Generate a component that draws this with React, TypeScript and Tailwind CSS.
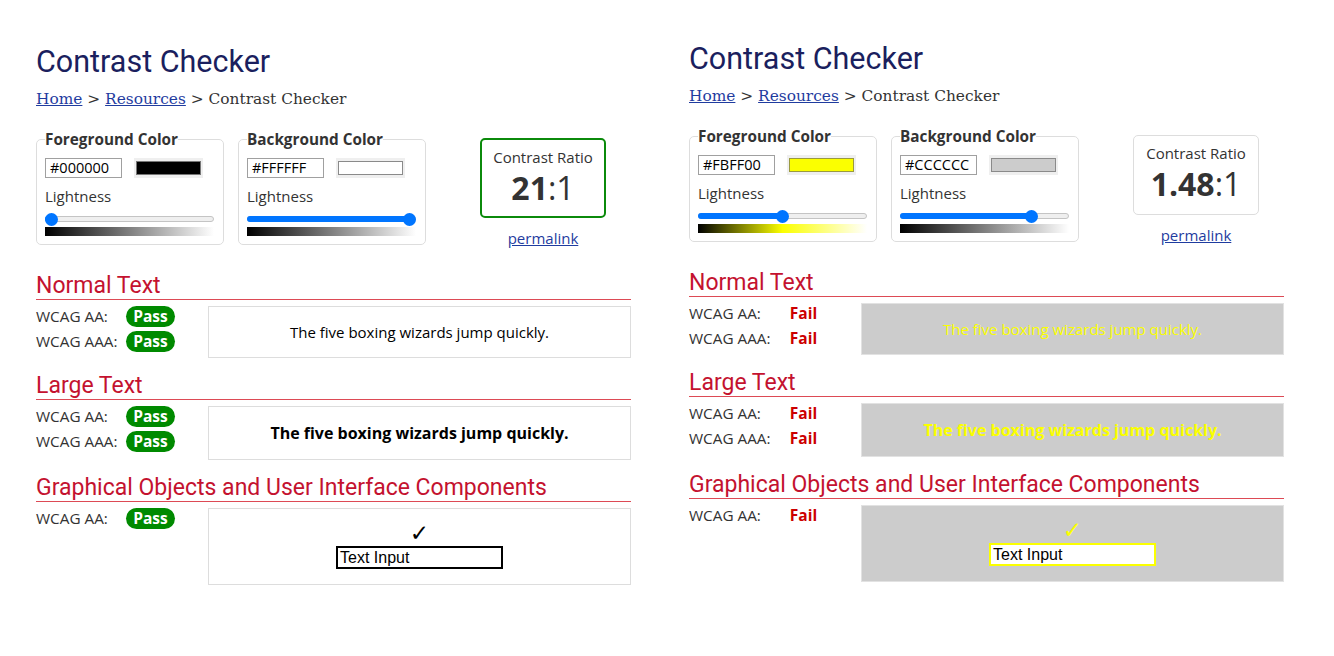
const panels = [
  {
    fg: "#000000",
    bg: "#FFFFFF",
    fgPct: 0,
    bgPct: 100,
    fgSwatch: "bg-black border-[#777777]",
    bgSwatch: "bg-white border-[#8a8a8a]",
    fgGrad: "bg-[linear-gradient(to_right,#000000,#ffffff)]",
    bgGrad: "bg-[linear-gradient(to_right,#000000,#ffffff)]",
    ratio: "21",
    ratioBox: "border-2 border-[#0b8a0b]",
    pass: true,
    sample: "bg-white text-black border-[#dddddd]",
    check: "text-black",
    input: "border-black",
    offset: "mt-[3px]",
  },
  {
    fg: "#FBFF00",
    bg: "#CCCCCC",
    fgPct: 50,
    bgPct: 80,
    fgSwatch: "bg-[#fbff00] border-[#9a9a40]",
    bgSwatch: "bg-[#cccccc] border-[#8a8a8a]",
    fgGrad: "bg-[linear-gradient(to_right,#000000,#fbff00_50%,#ffffff)]",
    bgGrad: "bg-[linear-gradient(to_right,#000000,#ffffff)]",
    ratio: "1.48",
    ratioBox: "border border-[#dddddd]",
    pass: false,
    sample: "bg-[#cccccc] text-[#fbff00] border-[#e2e2e2]",
    check: "text-[#fbff00]",
    input: "border-[#fbff00]",
    offset: "mt-0",
  },
]

type Panel = (typeof panels)[number]

function Slider({ pct }: { pct: number }) {
  return (
    <div className="relative mt-[6px] h-[14px] w-[169px]">
      <div className="absolute left-0 right-0 top-[4px] h-[6px] rounded-full border border-[#c4c4c4] bg-[#efefef]" />
      <div
        className="absolute left-0 top-[4px] h-[6px] rounded-full bg-[#0075ff]"
        style={{ width: `calc(6px + ${pct} * (100% - 13px) / 100)` }}
      />
      <div
        className="absolute top-[0.5px] h-[13px] w-[13px] rounded-full bg-[#0075ff]"
        style={{ left: `calc(${pct} * (100% - 13px) / 100)` }}
      />
    </div>
  )
}

function ColorField({
  title,
  value,
  swatch,
  pct,
  grad,
}: {
  title: string
  value: string
  swatch: string
  pct: number
  grad: string
}) {
  return (
    <fieldset className="w-[188px] rounded-[5px] border border-[#dddddd] px-2 pb-2 pt-[9px]">
      <legend className="text-[15.3px] font-bold leading-[20px] text-[#333333]">{title}</legend>
      <div className="flex items-center">
        <div className="flex h-[20px] w-[77px] items-center border border-[#a0a0a0] pl-[4px] text-[14.5px] text-black">
          {value}
        </div>
        <div className="ml-3 h-[20px] w-[69px] bg-[#efefef] px-[2px] py-[3px]">
          <div className={`h-full w-full border ${swatch}`} />
        </div>
      </div>
      <div className="mt-2 text-[15px] leading-[20px] text-[#333333]">Lightness</div>
      <Slider pct={pct} />
      <div className={`mt-px h-[9px] w-[169px] ${grad}`} />
    </fieldset>
  )
}

function Result({ pass }: { pass: boolean }) {
  return pass ? (
    <span className="flex h-[21px] w-[49px] items-center justify-center rounded-full bg-[#008a00] text-[15.5px] font-bold text-white">
      Pass
    </span>
  ) : (
    <span className="flex h-[21px] w-[49px] items-center justify-center text-[15.5px] font-bold text-[#cc0000]">
      Fail
    </span>
  )
}

function Section({
  title,
  levels,
  pass,
  children,
}: {
  title: string
  levels: string[]
  pass: boolean
  children: React.ReactNode
}) {
  return (
    <section>
      <h2 className="border-b border-[#dd4a55] font-['Roboto',sans-serif] text-[23px] leading-[26px] text-[#c4122f]">
        {title}
      </h2>
      <div className="mt-[6px] flex items-start">
        <div className="flex w-[172px] flex-col gap-1">
          {levels.map((level) => (
            <div key={level} className="flex h-[21px] items-center">
              <span className="w-[90px] text-[15.3px] text-[#333333]">{level}</span>
              <Result pass={pass} />
            </div>
          ))}
        </div>
        {children}
      </div>
    </section>
  )
}

function Checker({ p }: { p: Panel }) {
  return (
    <div className={`w-[595px] ${p.offset}`}>
      <h1 className="font-['Roboto',sans-serif] text-[30.5px] leading-[36px] text-[#1b1f5e]">Contrast Checker</h1>
      <p className="mt-[9px] font-['DejaVu_Serif',serif] text-[15.4px] leading-[20px] text-[#333333]">
        <a href="#" className="text-[#1f3c9f] underline">Home</a> &gt;{" "}
        <a href="#" className="text-[#1f3c9f] underline">Resources</a> &gt; Contrast Checker
      </p>

      <div className="mt-5 flex items-start">
        <ColorField title="Foreground Color" value={p.fg} swatch={p.fgSwatch} pct={p.fgPct} grad={p.fgGrad} />
        <div className="ml-[14px]">
          <ColorField title="Background Color" value={p.bg} swatch={p.bgSwatch} pct={p.bgPct} grad={p.bgGrad} />
        </div>
        <div className="ml-[54px] mt-[9px] flex flex-col items-center">
          <div className={`flex h-[80px] w-[126px] flex-col items-center rounded-[5px] pt-[7px] text-[#333333] ${p.ratioBox}`}>
            <div className="text-[15px] leading-[20px]">Contrast Ratio</div>
            <div className="mt-[3px] text-[32px] leading-[36px]">
              <span className="font-bold">{p.ratio}</span>:1
            </div>
          </div>
          <a href="#" className="mt-[10px] text-[15px] leading-[20px] text-[#1f3c9f] underline">
            permalink
          </a>
        </div>
      </div>

      <div className="mt-[25px] flex flex-col gap-[15px]">
        <Section title="Normal Text" levels={["WCAG AA:", "WCAG AAA:"]} pass={p.pass}>
          <div className={`flex-1 border py-[14px] text-center text-[15px] leading-[22px] ${p.sample}`}>
            The five boxing wizards jump quickly.
          </div>
        </Section>
        <Section title="Large Text" levels={["WCAG AA:", "WCAG AAA:"]} pass={p.pass}>
          <div className={`flex-1 border py-[14px] text-center text-[16px] font-bold leading-[24px] ${p.sample}`}>
            The five boxing wizards jump quickly.
          </div>
        </Section>
        <Section title="Graphical Objects and User Interface Components" levels={["WCAG AA:"]} pass={p.pass}>
          <div className={`flex flex-1 flex-col items-center border pb-[15px] pt-[14px] ${p.sample}`}>
            <span className={`font-['DejaVu_Sans',sans-serif] text-[23px] font-bold leading-[20px] ${p.check}`}>✓</span>
            <div
              className={`mt-[3px] flex h-[23px] w-[167px] items-center border-2 bg-white px-[2px] font-['Liberation_Sans',Arial,sans-serif] text-[16px] text-black ${p.input}`}
            >
              Text Input
            </div>
          </div>
        </Section>
      </div>
    </div>
  )
}

export default function App() {
  return (
    <div className="flex min-h-screen items-start gap-[58px] bg-white pl-[36px] pt-[41px] font-['Open_Sans',sans-serif]">
      {panels.map((p) => (
        <Checker key={p.fg} p={p} />
      ))}
    </div>
  )
}
